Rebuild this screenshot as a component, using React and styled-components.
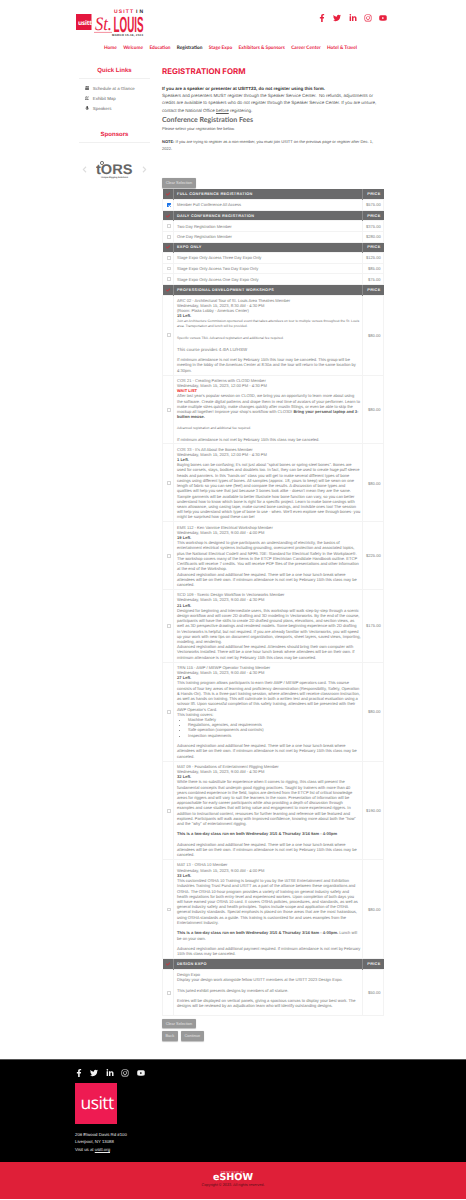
import React from 'react';
import styled, { createGlobalStyle } from 'styled-components';
import {
  FaFacebookF,
  FaTwitter,
  FaLinkedinIn,
  FaInstagram,
  FaYoutube,
  FaCalendarAlt,
  FaRegMap,
  FaMicrophone,
  FaCheck,
  FaChevronLeft,
  FaChevronRight,
} from 'react-icons/fa';

const RED = '#e8213f';

const Global = createGlobalStyle`
  body {
    margin: 0;
    background: #fff;
    font-family: "Liberation Sans", Arial, sans-serif;
    color: #555;
    text-rendering: geometricPrecision;
    -webkit-font-smoothing: antialiased;
  }
`;

const Wrap = styled.div`
  width: 316px;
  margin: 0 auto;
`;

const TopBar = styled.header`
  display: flex;
  align-items: flex-start;
  justify-content: space-between;
  padding: 7px 4px 0 1px;
  height: 37px;
  box-sizing: border-box;
`;

const Socials = styled.div`
  display: flex;
  align-items: center;
  gap: ${(p) => p.$gap}px;
  color: ${(p) => p.$color};
  font-size: 8px;
  padding-top: ${(p) => p.$top}px;
`;

const Nav = styled.nav`
  display: flex;
  justify-content: center;
  gap: 6.3px;
  height: 24px;
  padding-top: 8.4px;
  padding-right: 5px;
  box-sizing: border-box;
  font-family: Lato, sans-serif;
  font-size: 4.75px;
  font-weight: 700;
  line-height: 6px;
`;

const NavLink = styled.a`
  color: ${(p) => (p.$active ? '#222' : RED)};
`;

const Columns = styled.div`
  display: flex;
`;

const Side = styled.aside`
  width: 71px;
  margin-left: 4px;
  margin-right: 12px;
  padding-top: 7px;
`;

const SideTitle = styled.h3`
  margin: 0;
  height: 10px;
  line-height: 7px;
  font-size: 6.05px;
  font-weight: 700;
  text-align: center;
  color: ${RED};
  border-bottom: 1px solid #f0f0f0;
`;

const SideList = styled.ul`
  list-style: none;
  margin: 0;
  padding: 4px 0 0 6px;
  height: 52.5px;
  box-sizing: border-box;
`;

const SideItem = styled.li`
  display: flex;
  align-items: center;
  gap: 3.4px;
  height: 10px;
  font-size: 4.4px;
  color: #666;
  svg {
    width: 4.4px;
    height: 4.4px;
    color: #444;
  }
`;

const Carousel = styled.div`
  display: flex;
  align-items: center;
  justify-content: space-between;
  padding: 17px 2px 0;
  color: #ddd;
  font-size: 7px;
`;

const Main = styled.main`
  width: 221px;
  padding-top: 6.2px;
`;

const Title = styled.h1`
  margin: 0 0 9px;
  font-family: Inter, sans-serif;
  font-size: 7.9px;
  line-height: 8.5px;
  font-weight: 700;
  color: ${RED};
`;

const Lead = styled.p`
  margin: 0;
  width: 215px;
  font-size: 4.5px;
  line-height: 7.33px;
  color: #555;
  b { color: #333; }
  u { text-decoration: underline; }
`;

const Heading = styled.h2`
  margin: 2px 0 0;
  font-family: Lato, sans-serif;
  font-size: 7px;
  line-height: 8px;
  font-weight: 700;
  color: #666;
`;

const Small = styled.p`
  margin: 0;
  width: 215px;
  font-size: 4px;
  line-height: 6.6px;
  color: #555;
  padding-top: ${(p) => p.$top || 0}px;
  b { color: #333; }
`;

const Button = styled.button`
  display: inline-block;
  height: 9.5px;
  padding: 0 ${(p) => p.$pad || 3.7}px;
  border: 0;
  border-radius: 1px;
  background: #999;
  color: #e4e4e4;
  font-family: "Liberation Sans", Arial, sans-serif;
  font-size: 3.9px;
  line-height: 9.5px;
  box-shadow: 0 0.5px 1px rgba(0, 0, 0, 0.25);
`;

const ButtonRow = styled.div`
  display: flex;
  gap: 3.4px;
  margin-top: ${(p) => p.$top}px;
  margin-bottom: ${(p) => p.$bottom || 0}px;
`;

const Table = styled.table`
  width: 221px;
  table-layout: fixed;
  border-collapse: collapse;
  font-size: 4px;
  color: #777;
`;

const HeadRow = styled.tr`
  height: 10.6px;
  background: #6a6a6b;
  color: #f4f4f4;
`;

const HeadCell = styled.th`
  padding: 0 3px;
  font-size: 3.8px;
  font-weight: 700;
  letter-spacing: 0.32px;
  text-align: ${(p) => p.$align || 'left'};
  border-left: 1px solid #8a8a8a;
  &:first-child { border-left: 0; color: #c4363f; text-align: center; }
  svg { display: block; margin: 0 auto; width: 4px; height: 4px; }
`;

const Row = styled.tr`
  height: 10.6px;
`;

const Cell = styled.td`
  padding: ${(p) => (p.$long ? '2.15px 1.4px 1.75px 3px' : '0 1.4px 0 3px')};
  border: 1px solid #f3f3f3;
  line-height: 5.22px;
  vertical-align: middle;
  text-align: ${(p) => p.$align || 'left'};
  font-size: 4.07px;
  b { color: #555; }
  &:last-child { padding-right: 2.6px; }
`;

const Check = styled.input.attrs({ type: 'checkbox', readOnly: true })`
  appearance: none;
  position: relative;
  display: block;
  width: 3.8px;
  height: 3.8px;
  margin: 0 auto;
  border: 0.6px solid ${(p) => (p.checked ? '#1a73e8' : '#d4d4d4')};
  border-radius: 0.5px;
  background: ${(p) => (p.checked ? '#1a73e8' : '#fff')};
  box-sizing: border-box;
  &:checked::after {
    content: '';
    position: absolute;
    left: 0.9px;
    top: 0.1px;
    width: 0.9px;
    height: 1.7px;
    border: solid #fff;
    border-width: 0 0.5px 0.5px 0;
    transform: rotate(45deg);
  }
`;

const Tiny = styled.span`
  display: inline-block;
  font-size: 3.37px;
  line-height: 5.6px;
`;

const Big = styled.span`
  font-size: 4.4px;
`;

const Wait = styled.b`
  color: #f01010 !important;
`;

const Bullets = styled.ul`
  margin: 0;
  padding-left: 11px;
`;

const FooterBlack = styled.footer`
  margin-top: 18px;
  height: 103px;
  box-sizing: border-box;
  background: #000;
  border-top: 1px solid #555;
  padding-top: 9.6px;
  color: #e8e8e8;
`;

const LogoSquare = styled.div`
  width: 42px;
  height: 41.5px;
  margin-top: 5.5px;
  overflow: hidden;
  background: #ee1b52;
  color: #fff;
  font-family: "Open Sans", sans-serif;
  font-size: 17.5px;
  line-height: 41.5px;
  letter-spacing: -0.6px;
  padding-left: 5.6px;
  box-sizing: border-box;
  white-space: nowrap;
`;

const Address = styled.address`
  margin-top: 6.8px;
  font-style: normal;
  font-size: 4.3px;
  line-height: 7.3px;
  u { text-decoration: underline; }
`;

const FooterRed = styled.div`
  height: 37px;
  background: #df1f38;
  display: flex;
  flex-direction: column;
  align-items: center;
  padding-top: 9px;
  box-sizing: border-box;
`;

const Powered = styled.span`
  font-family: "Liberation Sans", sans-serif;
  font-size: 2.9px;
  line-height: 3px;
  letter-spacing: 0.5px;
  color: #f4b8c0;
`;

const Brand = styled.span`
  font-family: "DejaVu Sans", sans-serif;
  font-size: 9.6px;
  line-height: 7.5px;
  font-weight: 700;
  color: #fff;
`;

const Copy = styled.span`
  margin-top: 2.4px;
  font-size: 3.8px;
  line-height: 5px;
  color: #5a1019;
`;

const SocialIcons = () => (
  <>
    <FaFacebookF />
    <FaTwitter />
    <FaLinkedinIn />
    <FaInstagram />
    <FaYoutube />
  </>
);

const ShowLogo = () => (
  <svg width="70" height="30" viewBox="0 0 70 30">
    <rect x="0" y="7" width="15.5" height="16" fill="#e4173e" />
    <text x="2" y="17.6" fontFamily="Open Sans, sans-serif" fontSize="6.4" fontWeight="700" fill="#fff" letterSpacing="-0.2">usitt</text>
    <text x="19" y="23" fontFamily="Liberation Serif, serif" fontStyle="italic" fontSize="19" fill={RED} textLength="17" lengthAdjust="spacingAndGlyphs">St.</text>
    <line x1="18" y1="25.4" x2="36" y2="25.4" stroke={RED} strokeWidth="0.5" />
    <text x="38" y="5.8" fontFamily="Liberation Sans, sans-serif" fontSize="5" fontWeight="700" fill={RED} textLength="19">USITT</text>
    <text x="60" y="5.8" fontFamily="Liberation Sans, sans-serif" fontSize="5" fontWeight="700" fill="#222" textLength="7">IN</text>
    <text x="0" y="0" transform="translate(37.5 24.6) scale(1 2.2)" fontFamily="Liberation Sans, sans-serif" fontSize="10" fontWeight="700" fill={RED} textLength="30" lengthAdjust="spacingAndGlyphs">LOUIS</text>
    <text x="36" y="29" fontFamily="Liberation Sans, sans-serif" fontSize="2.9" fontWeight="700" fill="#333" textLength="31">MARCH 15-18, 2023</text>
  </svg>
);

const SponsorLogo = () => (
  <svg width="37" height="20" viewBox="0 0 37 20">
    <circle cx="6" cy="3" r="1.6" fill="none" stroke="#666" strokeWidth="0.9" />
    <text x="0" y="14" fontFamily="Liberation Sans, sans-serif" fontSize="14" fontWeight="700" fill="#666" textLength="36.5" lengthAdjust="spacingAndGlyphs">tORS</text>
    <text x="5" y="18" fontFamily="Liberation Sans, sans-serif" fontSize="2.3" fontWeight="700" fill="#555" textLength="27">Unique Rigging Solutions</text>
  </svg>
);

const AD_FEE =
  'Advanced registration and additional fee required. There will be a one hour lunch break where attendees will be on their own. If minimum attendance is not met by February 15th this class may be canceled.';

const workshops = [
  {
    price: '$80.00',
    body: (
      <>
        ARC 02 - Architectural Tour of St. Louis Area Theatres Member<br />
        Wednesday, March 15, 2023, 8:30 AM - 4:30 PM<br />
        (Room: Plaza Lobby - Americas Center)<br />
        <b>15 Left.</b><br />
        <Tiny>Join an Architecture Commission-sponsored event that takes attendees on tour to multiple venues throughout the St. Louis area. Transportation and lunch will be provided.</Tiny><br />
        <br />
        <Tiny>Specific venues TBA. Advanced registration and additional fee required.</Tiny><br />
        <br />
        <Big>This course provides 4.4IA LU/HSW</Big><br />
        <br />
        If minimum attendance is not met by February 15th this tour may be canceled. This group will be meeting in the lobby of the Americas Center at 8:30a and the tour will return to the same location by 4:30pm.
      </>
    ),
  },
  {
    price: '$80.00',
    body: (
      <>
        COS 21 - Creating Patterns with CLO3D Member<br />
        Wednesday, March 15, 2023, 12:00 PM - 4:30 PM<br />
        <Wait>WAIT LIST</Wait><br />
        After last year's popular session on CLO3D, we bring you an opportunity to learn more about using the software. Create digital patterns and drape them in real time of avatars of your performer. Learn to make multiple sizes quickly, make changes quickly after muslin fittings, or even be able to skip the mockup all together! Improve your shop's workflow with CLO3D! <b>Bring your personal laptop and 3-button mouse.</b><br />
        <br />
        <Tiny>Advanced registration and additional fee required.</Tiny><br />
        <br />
        If minimum attendance is not met by February 15th this class may be canceled.
      </>
    ),
  },
  {
    price: '$80.00',
    body: (
      <>
        COS 33 - It's All About the Bones Member<br />
        Wednesday, March 15, 2023, 12:00 PM - 4:30 PM<br />
        <b>1 Left.</b><br />
        Buying bones can be confusing; it's not just about "spiral bones or spring steel bones". Bones are used for corsets, stays, bodices and doublets too. In fact, they can be used to create huge puff sleeve heads and panniers. In this "hands on" class you will get to make several different types of bone casings using different types of bones. All samples (approx. 18, yours to keep) will be sewn on one length of fabric so you can see (feel) and compare the results. A discussion of bone types and qualities will help you see that just because 3 bones look alike - doesn't mean they are the same. Sample garments will be available to better illustrate how bone function can vary, so you can better understand how to know which bone is right for a specific project. Learn to make bone casings with seam allowance, using casing tape, make curved bone casings, and invisible ones too! The session will help you understand which type of bone to use - when. We'll even explore see through bones- you might be surprised how good these can be!
      </>
    ),
  },
  {
    price: '$225.00',
    body: (
      <>
        EMS 112 - Ken Vannice Electrical Workshop Member<br />
        Wednesday, March 15, 2023, 9:00 AM - 4:00 PM<br />
        <b>19 Left.</b><br />
        This workshop is designed to give participants an understanding of electricity, the basics of entertainment electrical systems including grounding, overcurrent protection and associated topics, plus the National Electrical Code® and NFPA 70E: Standard for Electrical Safety in the Workplace®. The workshop covers many of the items in the ETCP Electrician Candidate Handbook outline. ETCP Certificants will receive 7 credits. You will receive PDF files of the presentations and other information at the end of the Workshop.<br />
        {AD_FEE}
      </>
    ),
  },
  {
    price: '$175.00',
    body: (
      <>
        SCD 109 - Scenic Design Workflow in Vectorworks Member<br />
        Wednesday, March 15, 2023, 9:00 AM - 4:30 PM<br />
        <b>21 Left.</b><br />
        Designed for beginning and intermediate users, this workshop will walk step-by-step through a scenic design workflow and will cover 2D drafting and 3D modeling in Vectorworks. By the end of the course, participants will have the skills to create 2D drafted ground plans, elevations, and section views, as well as 3D perspective drawings and rendered models. Some beginning experience with 2D drafting in Vectorworks is helpful, but not required. If you are already familiar with Vectorworks, you will speed up your work with new tips on document organization, viewports, sheet layers, saved views, importing, modeling, and rendering.<br />
        Advanced registration and additional fee required. Attendees should bring their own computer with Vectorworks installed. There will be a one hour lunch break where attendees will be on their own. If minimum attendance is not met by February 15th this class may be canceled.
      </>
    ),
  },
  {
    price: '$80.00',
    body: (
      <>
        TRN 115 - AWP / MEWP Operator Training Member<br />
        Wednesday, March 15, 2023, 9:00 AM - 4:30 PM<br />
        <b>27 Left.</b><br />
        This training program allows participants to earn their AWP / MEWP operators card. This course consists of four key areas of learning and proficiency demonstration (Responsibility, Safety, Operation &amp; Hands-On). This is a three-part training session, where attendees will receive classroom instruction, as well as hands on training. This will culminate in both a written test and practical evaluation using a scissor lift. Upon successful completion of this safety training, attendees will be presented with their AWP Operator's Card.<br />
        This training covers:
        <Bullets>
          <li>Machine Safety</li>
          <li>Regulations, agencies, and requirements</li>
          <li>Safe operation (components and controls)</li>
          <li>Inspection requirements</li>
        </Bullets>
        <br />
        {AD_FEE}
      </>
    ),
  },
  {
    price: '$190.00',
    body: (
      <>
        MAT 09 - Foundations of Entertainment Rigging Member<br />
        Wednesday, March 15, 2023, 9:00 AM - 4:30 PM<br />
        <b>32 Left.</b><br />
        While there is no substitute for experience when it comes to rigging, this class will present the fundamental concepts that underpin good rigging practices. Taught by trainers with more than 40 years combined experience in the field, topics are derived from the ETCP list of critical knowledge areas for riggers and will vary to suit the learners in the room. Presentation of information will be approachable for early career participants while also providing a depth of discussion through examples and case studies that will bring value and engagement to more experienced riggers. In addition to instructional content, resources for further learning and reference will be featured and explored. Participants will walk away with improved confidence, knowing more about both the "how" and the "why" of entertainment rigging.<br />
        <br />
        <b>This is a two-day class run on both Wednesday 3/15 &amp; Thursday 3/16 9am - 4:00pm</b><br />
        <br />
        {AD_FEE}
      </>
    ),
  },
  {
    price: '$80.00',
    body: (
      <>
        MAT 13 - OSHA 10 Member<br />
        Wednesday, March 15, 2023, 9:00 AM - 4:00 PM<br />
        <b>33 Left.</b><br />
        This customized OSHA 10 Training is brought to you by the IATSE Entertainment and Exhibition Industries Training Trust Fund and USITT as a part of the alliance between these organizations and OSHA. The OSHA 10-hour program provides a variety of training on general industry safety and health regulations for both entry-level and experienced workers. Upon completion of both days you will have earned your OSHA 10 card. It covers OSHA policies, procedures, and standards, as well as general industry safety and health principles. Topics include scope and application of the OSHA general industry standards. Special emphasis is placed on those areas that are the most hazardous, using OSHA standards as a guide. This training is customized for and uses examples from the Entertainment Industry.<br />
        <br />
        <b>This is a two-day class run on both Wednesday 3/15 &amp; Thursday 3/16 9am - 4:00pm.</b> Lunch will be on your own.<br />
        <br />
        Advanced registration and additional payment required. If minimum attendance is not met by February 15th this class may be canceled.
      </>
    ),
  },
];

const Section = ({ title }) => (
  <HeadRow>
    <HeadCell><FaCheck /></HeadCell>
    <HeadCell>{title}</HeadCell>
    <HeadCell $align="right">PRICE</HeadCell>
  </HeadRow>
);

const Item = ({ children, price, checked, long }) => (
  <Row>
    <Cell $long={long}><Check checked={!!checked} /></Cell>
    <Cell $long={long}>{children}</Cell>
    <Cell $long={long} $align="right">{price}</Cell>
  </Row>
);

const App = () => (
  <>
    <Global />
    <Wrap>
      <TopBar>
        <ShowLogo />
        <Socials $gap={7.2} $color={RED} $top={7}>
          <SocialIcons />
        </Socials>
      </TopBar>
      <Nav>
        <NavLink>Home</NavLink>
        <NavLink>Welcome</NavLink>
        <NavLink>Education</NavLink>
        <NavLink $active>Registration</NavLink>
        <NavLink>Stage Expo</NavLink>
        <NavLink>Exhibitors &amp; Sponsors</NavLink>
        <NavLink>Career Center</NavLink>
        <NavLink>Hotel &amp; Travel</NavLink>
      </Nav>
      <Columns>
        <Side>
          <SideTitle>Quick Links</SideTitle>
          <SideList>
            <SideItem><FaCalendarAlt />Schedule at a Glance</SideItem>
            <SideItem><FaRegMap />Exhibit Map</SideItem>
            <SideItem><FaMicrophone />Speakers</SideItem>
          </SideList>
          <SideTitle>Sponsors</SideTitle>
          <Carousel>
            <FaChevronLeft />
            <SponsorLogo />
            <FaChevronRight />
          </Carousel>
        </Side>
        <Main>
          <Title>REGISTRATION FORM</Title>
          <Lead>
            <b>If you are a speaker or presenter at USITT23, do not register using this form.</b><br />
            Speakers and presenters MUST register through the Speaker Service Center.&nbsp; No refunds, adjustments or credits are available to speakers who do not register through the Speaker Service Center. If you are unsure, contact the National Office <u>before</u> registering.
          </Lead>
          <Heading>Conference Registration Fees</Heading>
          <Small $top={2.4}>Please select your registration fee below.</Small>
          <Small $top={6.4}><b>NOTE:</b> If you are trying to register as a non-member, you must join USITT on the previous page or register after Dec. 1, 2022.</Small>
          <ButtonRow $top={25.5} $bottom={1.5}>
            <Button>Clear Selection</Button>
          </ButtonRow>
          <Table>
            <colgroup>
              <col style={{ width: '11px' }} />
              <col style={{ width: '189px' }} />
              <col style={{ width: '21px' }} />
            </colgroup>
            <tbody>
              <Section title="FULL CONFERENCE REGISTRATION" />
              <Item price="$575.00" checked>Member Full Conference All Access</Item>
              <Section title="DAILY CONFERENCE REGISTRATION" />
              <Item price="$375.00">Two Day Registration Member</Item>
              <Item price="$280.00">One Day Registration Member</Item>
              <Section title="EXPO ONLY" />
              <Item price="$125.00">Stage Expo Only Access Three Day Expo Only</Item>
              <Item price="$85.00">Stage Expo Only Access Two Day Expo Only</Item>
              <Item price="$75.00">Stage Expo Only Access One Day Expo Only</Item>
              <Section title="PROFESSIONAL DEVELOPMENT WORKSHOPS" />
              {workshops.map((w) => (
                <Item key={w.price + w.body.props.children[0]} price={w.price} long>{w.body}</Item>
              ))}
              <Section title="DESIGN EXPO" />
              <Item price="$50.00" long>
                Design Expo<br />
                Display your design work alongside fellow USITT members at the USITT 2023 Design Expo.<br />
                <br />
                This juried exhibit presents designs by members of all stature.<br />
                <br />
                Entries will be displayed on vertical panels, giving a spacious canvas to display your best work. The designs will be reviewed by an adjudication team who will identify outstanding designs.<br />
                <br />
              </Item>
            </tbody>
          </Table>
          <ButtonRow $top={2.6}>
            <Button>Clear Selection</Button>
          </ButtonRow>
          <ButtonRow $top={2.6}>
            <Button $pad={3.5}>Back</Button>
            <Button $pad={3.5}>Continue</Button>
          </ButtonRow>
        </Main>
      </Columns>
    </Wrap>
    <FooterBlack>
      <Wrap>
        <Socials $gap={7.4} $color="#f2f2f2" $top={0}>
          <SocialIcons />
        </Socials>
        <LogoSquare>usitt</LogoSquare>
        <Address>
          206 Elwood Davis Rd #100<br />
          Liverpool, NY 13088<br />
          Visit us at <u>usitt.org</u>
        </Address>
      </Wrap>
    </FooterBlack>
    <FooterRed>
      <Powered>POWERED BY</Powered>
      <Brand>eSHOW</Brand>
      <Copy>Copyright © 2023. All rights reserved.</Copy>
    </FooterRed>
  </>
);

export default App;
